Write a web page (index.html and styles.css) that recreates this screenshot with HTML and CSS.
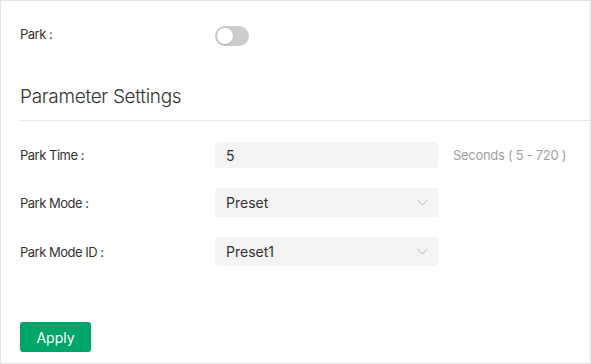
FILE: index.html
```html
<!DOCTYPE html>
<html lang="en">
<head>
    <meta charset="UTF-8">
    <meta name="viewport" content="width=device-width, initial-scale=1.0">
    <title>Park</title>
    <link rel="stylesheet" href="styles.css">
</head>
<body>
    <div class="panel">
        <div class="row row-park">
            <label class="label label-park">Park :</label>
            <span class="toggle"><span class="knob"></span></span>
        </div>

        <h2 class="section-title">Parameter Settings</h2>

        <div class="row row-time">
            <label class="label">Park Time :</label>
            <input class="field" value="5" autocomplete="off"/>
            <span class="hint">Seconds ( 5 - 720 )</span>
        </div>
        <div class="row row-select">
            <label class="label">Park Mode :</label>
            <div class="field select">
                <span>Preset</span>
                <svg class="chevron" width="11" height="7" viewBox="0 0 11 7"><path d="M0.5 0.8 L5.5 6 L10.5 0.8" fill="none" stroke="#b3b3b3" stroke-width="1"/></svg>
            </div>
        </div>
        <div class="row row-select">
            <label class="label">Park Mode ID :</label>
            <div class="field select">
                <span>Preset1</span>
                <svg class="chevron" width="11" height="7" viewBox="0 0 11 7"><path d="M0.5 0.8 L5.5 6 L10.5 0.8" fill="none" stroke="#b3b3b3" stroke-width="1"/></svg>
            </div>
        </div>

        <button class="apply">Apply</button>
    </div>
</body>
</html>
```

FILE: styles.css
```css
* {
    font-family: "Inter", "Noto Sans", sans-serif;
    box-sizing: border-box;
}
body {
    margin: 0;
    background: #fff;
    color: #333;
}
.panel {
    width: 591px;
    height: 364px;
    border: 1px solid #e3e3e3;
    padding-top: 25px;
}
.row {
    display: flex;
    align-items: center;
    padding-left: 19px;
}
.label {
    width: 195px;
    font-size: 13px;
    color: #333;
    letter-spacing: -0.5px;
}
.label-park {
    margin-top: -4px;
}
.row-park {
    height: 20px;
}
.toggle {
    position: relative;
    width: 34px;
    height: 20px;
    border-radius: 10px;
    background: #cccccc;
}
.knob {
    position: absolute;
    left: 2px;
    top: 2px;
    width: 16px;
    height: 16px;
    border-radius: 50%;
    background: #fff;
    box-shadow: 0 1px 2px rgba(0, 0, 0, 0.15);
}
.section-title {
    margin: 39px 0 0 19px;
    padding-bottom: 11px;
    font-size: 19px;
    line-height: 24px;
    font-weight: 300;
    color: #333;
    border-bottom: 1px solid #e8e8e8;
    letter-spacing: -0.3px;
}
.row-time {
    margin-top: 21px;
}
.field {
    width: 223px;
    height: 26px;
    padding: 0 11px;
    border: 0;
    border-radius: 3px;
    background: #f4f4f4;
    outline: 0;
    font-size: 14px;
    color: #333;
}
.hint {
    margin-left: 15px;
    font-size: 13px;
    color: #a0a0a0;
    letter-spacing: -0.3px;
}
.row-select {
    margin-top: 20px;
}
.select {
    height: 29px;
    display: flex;
    align-items: center;
    justify-content: space-between;
    padding-right: 10px;
}
.apply {
    margin: 56px 0 0 19px;
    width: 71px;
    height: 30px;
    border: 0;
    border-radius: 3px;
    background: #00a569;
    color: #fff;
    font-size: 14px;
    cursor: pointer;
}
```
